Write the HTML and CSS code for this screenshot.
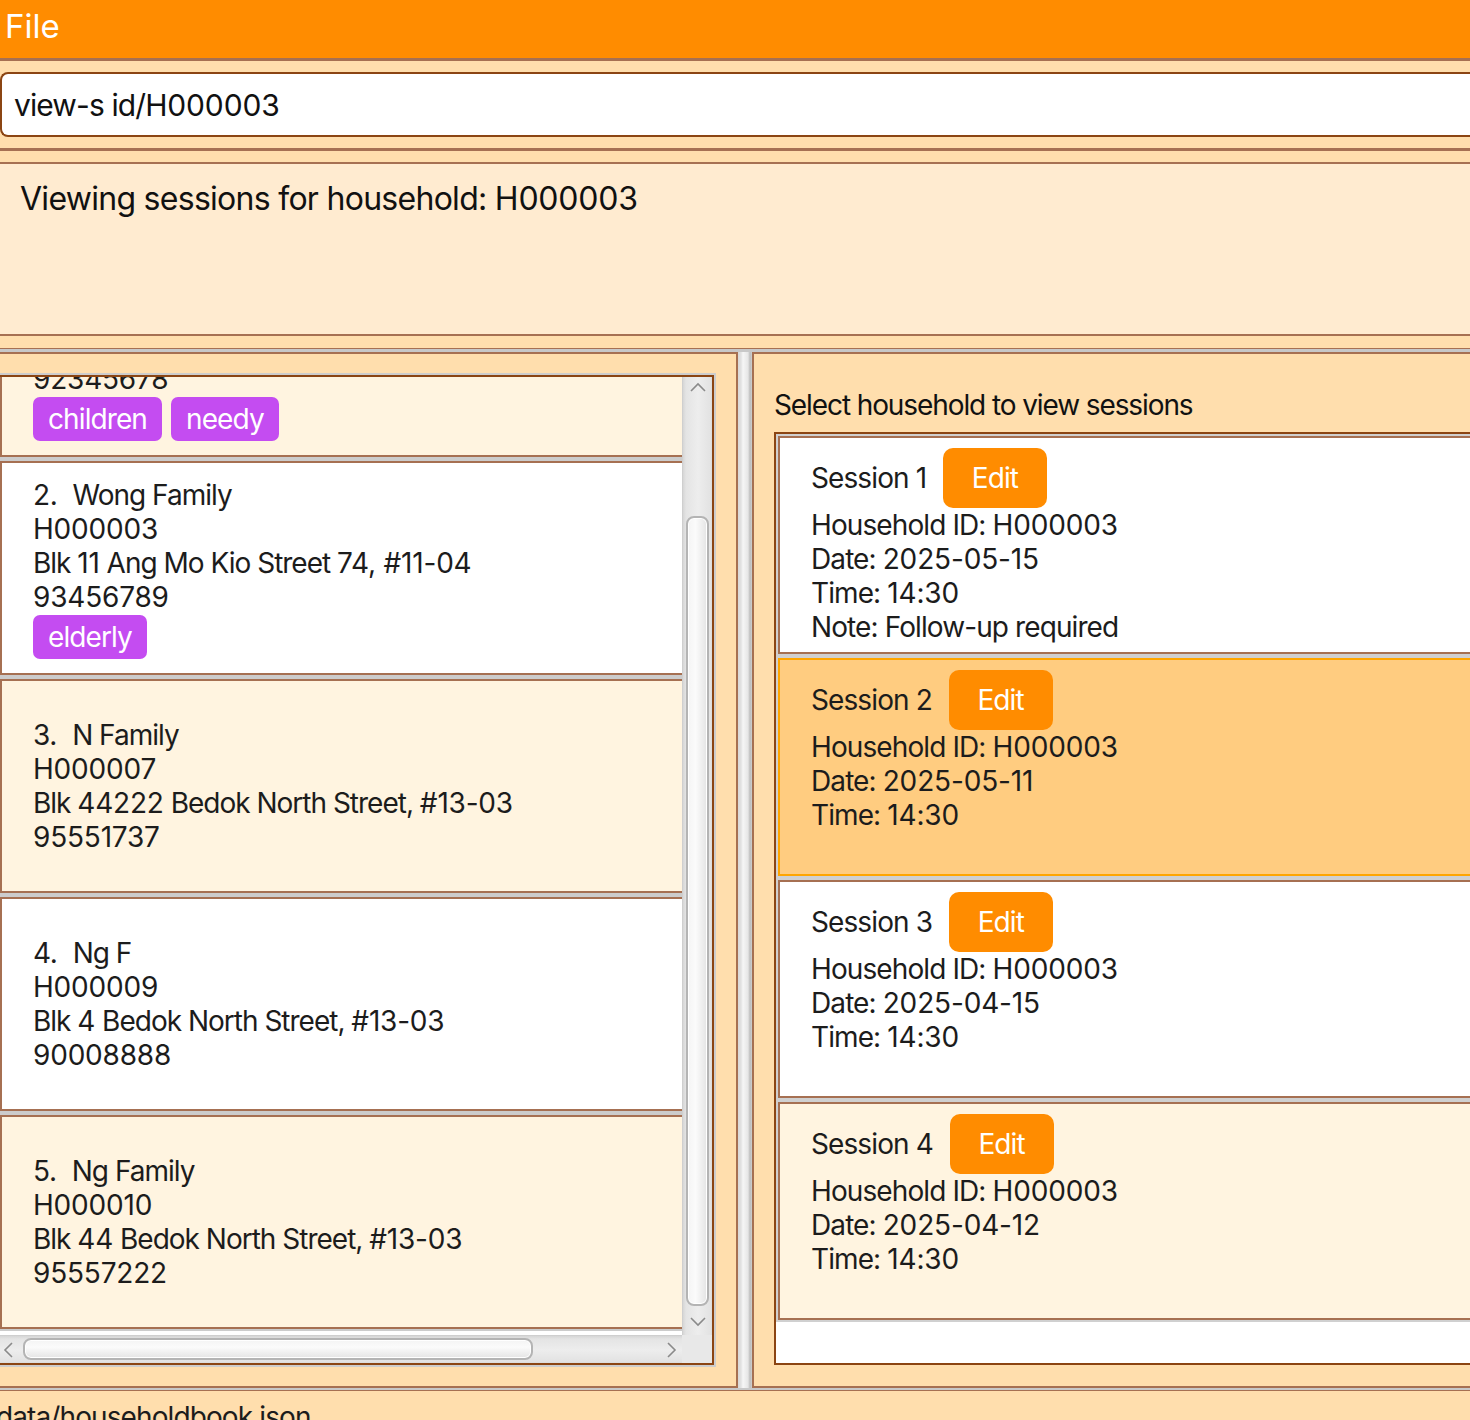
FILE: index.html
```html
<!DOCTYPE html>
<html>
<head>
<meta charset="utf-8">
<link rel="stylesheet" href="styles.css">
</head>
<body>
<div class="app">
  <div class="menubar"><span class="menu-item">File</span></div>
  <div class="cmd-area"><div class="cmd">view-s id/<span class="num">H000003</span></div></div>
  <div class="result-area"><div class="result">Viewing sessions for household: <span class="num">H000003</span></div></div>
  <div class="split">
    <div class="panel panel-left">
      <div class="listbox">
        <div class="viewport">
          <div class="list-content">
            <div class="cell"><div class="hh-card cream">
              <div class="hidden-lines"></div>
              <div class="line num">92345678</div>
              <div class="tags"><span class="tag">children</span><span class="tag">needy</span></div>
            </div></div>
            <div class="cell"><div class="hh-card white">
              <div class="line"><span class="idx">2.</span>Wong Family</div>
              <div class="line num">H000003</div>
              <div class="line">Blk <span class="num">11</span> Ang Mo Kio Street <span class="num">74, #11-04</span></div>
              <div class="line num">93456789</div>
              <div class="tags"><span class="tag">elderly</span></div>
            </div></div>
            <div class="cell"><div class="hh-card cream">
              <div class="line"><span class="idx">3.</span>N Family</div>
              <div class="line num">H000007</div>
              <div class="line">Blk <span class="num">44222</span> Bedok North Street, <span class="num">#13-03</span></div>
              <div class="line num">95551737</div>
            </div></div>
            <div class="cell"><div class="hh-card white">
              <div class="line"><span class="idx">4.</span>Ng F</div>
              <div class="line num">H000009</div>
              <div class="line">Blk <span class="num">4</span> Bedok North Street, <span class="num">#13-03</span></div>
              <div class="line num">90008888</div>
            </div></div>
            <div class="cell"><div class="hh-card cream">
              <div class="line"><span class="idx">5.</span>Ng Family</div>
              <div class="line num">H000010</div>
              <div class="line">Blk <span class="num">44</span> Bedok North Street, <span class="num">#13-03</span></div>
              <div class="line num">95557222</div>
            </div></div>
          </div>
        </div>
        <div class="vscroll">
          <svg class="arrow arrow-up" width="16" height="10" viewBox="0 0 16 10"><path d="M1 9 L8 2 L15 9" fill="none" stroke="#8a8a8a" stroke-width="1.6"/></svg>
          <div class="vthumb"></div>
          <svg class="arrow arrow-down" width="16" height="10" viewBox="0 0 16 10"><path d="M1 1 L8 8 L15 1" fill="none" stroke="#8a8a8a" stroke-width="1.6"/></svg>
        </div>
        <div class="hscroll">
          <svg class="arrow arrow-left" width="10" height="16" viewBox="0 0 10 16"><path d="M9 1 L2 8 L9 15" fill="none" stroke="#8a8a8a" stroke-width="1.6"/></svg>
          <div class="hthumb"></div>
          <svg class="arrow arrow-right" width="10" height="16" viewBox="0 0 10 16"><path d="M1 1 L8 8 L1 15" fill="none" stroke="#8a8a8a" stroke-width="1.6"/></svg>
        </div>
        <div class="corner"></div>
      </div>
    </div>
    <div class="divider"></div>
    <div class="panel panel-right">
      <div class="panel-label">Select household to view sessions</div>
      <div class="session-list">
        <div class="scell"><div class="s-card white">
          <div class="s-head"><span>Session <span class="num">1</span></span><span class="edit-btn">Edit</span></div>
          <div class="line">Household ID: <span class="num">H000003</span></div>
          <div class="line">Date: <span class="num">2025-05-15</span></div>
          <div class="line">Time: <span class="num">14:30</span></div>
          <div class="line">Note: Follow-up required</div>
        </div></div>
        <div class="scell"><div class="s-card selected">
          <div class="s-head"><span>Session <span class="num">2</span></span><span class="edit-btn">Edit</span></div>
          <div class="line">Household ID: <span class="num">H000003</span></div>
          <div class="line">Date: <span class="num">2025-05-11</span></div>
          <div class="line">Time: <span class="num">14:30</span></div>
        </div></div>
        <div class="scell"><div class="s-card white">
          <div class="s-head"><span>Session <span class="num">3</span></span><span class="edit-btn">Edit</span></div>
          <div class="line">Household ID: <span class="num">H000003</span></div>
          <div class="line">Date: <span class="num">2025-04-15</span></div>
          <div class="line">Time: <span class="num">14:30</span></div>
        </div></div>
        <div class="scell"><div class="s-card cream">
          <div class="s-head"><span>Session <span class="num">4</span></span><span class="edit-btn">Edit</span></div>
          <div class="line">Household ID: <span class="num">H000003</span></div>
          <div class="line">Date: <span class="num">2025-04-12</span></div>
          <div class="line">Time: <span class="num">14:30</span></div>
        </div></div>
      </div>
    </div>
  </div>
  <div class="status">data/householdbook.json</div>
</div>
</body>
</html>
```
FILE: styles.css
```css
* { box-sizing: border-box; }
html, body { margin: 0; padding: 0; }
body {
  width: 1470px;
  height: 1420px;
  overflow: hidden;
  background: #FFDEAD;
  font-family: Inter, "Noto Sans", sans-serif;
  color: #1c1c1c;
  letter-spacing: -0.9px;
}
.num { letter-spacing: -0.15px; }
.app { display: flex; flex-direction: column; height: 1420px; width: 1470px; overflow: hidden; }

.menubar {
  height: 61px;
  flex: none;
  background: #FF8C00;
  border-bottom: 3px solid #A67052;
  display: flex;
  align-items: center;
  padding-left: 5px;
  padding-bottom: 6px;
}
.menu-item { color: #fff; font-size: 33px; letter-spacing: 0; }

.cmd-area {
  flex: none;
  background: #FFDEAD;
  padding: 11px 0;
  border-bottom: 3px solid #A67052;
}
.cmd {
  height: 65px;
  background: #fff;
  border: 2px solid #8B4513;
  border-right: none;
  border-radius: 8px 0 0 8px;
  margin-right: -10px;
  display: flex;
  align-items: center;
  padding-left: 12px;
  font-size: 30px;
  color: #111;
  white-space: pre;
}

.result-area {
  flex: none;
  padding: 11px 0 12px;
  background: #FFDEAD;
}
.result {
  height: 174px;
  background: #FFEBD0;
  border-top: 2px solid #A67052;
  border-bottom: 2px solid #A67052;
  padding: 14px 0 0 20px;
  font-size: 32px;
  line-height: 42px;
  color: #111;
  letter-spacing: -0.72px;
}
.result .num { letter-spacing: -0.2px; }

.split {
  flex: none;
  height: 1042px;
  display: flex;
  background: #C8C8C8;
  border-top: 1px solid #A67052;
  padding: 3px 0 2px;
}
.panel {
  background: #FFDEAD;
  border-top: 2px solid #A67052;
  border-bottom: 2px solid #A67052;
}
.panel-left {
  width: 738px;
  flex: none;
  border-right: 2px solid #A67052;
  padding: 21px 22px 21px 0;
}
.divider {
  width: 14px;
  flex: none;
  background: linear-gradient(to right, #d8d8d8 0, #e2e2e2 3px, #f6f6f6 5px, #e6e6e6 10px, #bdbdbd 12px, #cfcfcf 14px);
}
.panel-right {
  flex: 1;
  border-left: 2px solid #A67052;
  padding: 0 0 21px 20px;
  display: flex;
  flex-direction: column;
  min-width: 0;
}

/* left list */
.listbox {
  height: 990px;
  border: 2px solid #8B4513;
  border-left: none;
  box-shadow: 0 0 0 2px #cdcdcd;
  display: grid;
  grid-template-columns: 1fr 30px;
  grid-template-rows: 1fr 28px;
  background: #fff;
}
.viewport { overflow: hidden; }
.list-content { margin-top: -136px; width: 860px; }
.cell { background: #CCCCCC; padding: 2px 0; }
.hh-card {
  height: 214px;
  border: 2px solid #A67052;
  border-right: none;
  padding-left: 31px;
  display: flex;
  flex-direction: column;
  justify-content: center;
  font-size: 28px;
}
.hidden-lines { height: 102px; flex: none; }
.cream { background: #FFF4E0; }
.white { background: #fff; }
.line { line-height: 34px; white-space: pre; font-size: 28px; }
.hh-card .line { letter-spacing: -1px; }
.hh-card .line .num, .hh-card .line.num { letter-spacing: -0.2px; }
.idx { margin-right: 15px; letter-spacing: -0.3px; }
.tags { display: flex; gap: 9px; margin-top: 1px; }
.tag {
  background: #C44CF1;
  color: #fff;
  height: 44px;
  line-height: 44px;
  padding: 0 15px;
  border-radius: 7px;
  font-size: 28px;
}

.vscroll {
  position: relative;
  background: linear-gradient(to right, #d6d6d6 0, #e4e4e4 3px, #ededed 15px, #e2e2e2 28px, #d0d0d0 30px);
  border-left: 1px solid #cfcfcf;
}
.hscroll {
  position: relative;
  background: linear-gradient(to bottom, #d6d6d6 0, #e4e4e4 3px, #ededed 14px, #e2e2e2 26px, #d0d0d0 28px);
  border-top: 1px solid #cfcfcf;
}
.corner { background: #e8e8e8; }
.arrow { position: absolute; display: block; }
.arrow-up { top: 5px; left: 7px; }
.arrow-down { bottom: 8px; left: 7px; }
.arrow-left { left: 3px; top: 6px; }
.arrow-right { left: 667px; top: 6px; }
.vthumb {
  position: absolute;
  left: 3px;
  top: 139px;
  width: 23px;
  height: 790px;
  border: 2px solid #b4b4b4;
  border-radius: 8px;
  background: linear-gradient(to right, #f4f4f4, #fbfbfb 40%, #e4e4e4);
  box-shadow: inset 0 0 0 1px #fff;
}
.hthumb {
  position: absolute;
  left: 23px;
  top: 2px;
  width: 510px;
  height: 22px;
  border: 2px solid #b4b4b4;
  border-radius: 8px;
  background: linear-gradient(to bottom, #f4f4f4, #fbfbfb 40%, #e4e4e4);
  box-shadow: inset 0 0 0 1px #fff;
}

/* right panel */
.panel-label {
  margin-top: 34px;
  margin-bottom: 10px;
  line-height: 34px;
  font-size: 28px;
  color: #111;
  white-space: nowrap;
  letter-spacing: -1.1px;
}
.session-list {
  flex: 1;
  background: #fff;
  border: 2px solid #8B4513;
  border-right: none;
  margin-right: -20px;
}
.scell { background: #D0D0D0; padding: 2px 0 2px 2px; }
.s-card {
  height: 218px;
  border: 2px solid #A67052;
  border-right: none;
  padding: 10px 0 0 31px;
}
.s-card.selected { background: #FFCC80; border-color: #FFA500; }
.s-head {
  display: flex;
  align-items: center;
  gap: 16px;
  height: 60px;
  font-size: 28px;
}
.edit-btn {
  width: 104px;
  height: 60px;
  background: #FF8C00;
  color: #fff;
  border-radius: 10px;
  display: flex;
  align-items: center;
  justify-content: center;
  font-size: 28px;
}

.status {
  flex: 1;
  border-top: 1px solid #A67052;
  background: #FFDEAD;
  font-size: 28px;
  padding-top: 6px;
  margin-left: -4px;
  line-height: 40px;
  white-space: nowrap;
}
```
